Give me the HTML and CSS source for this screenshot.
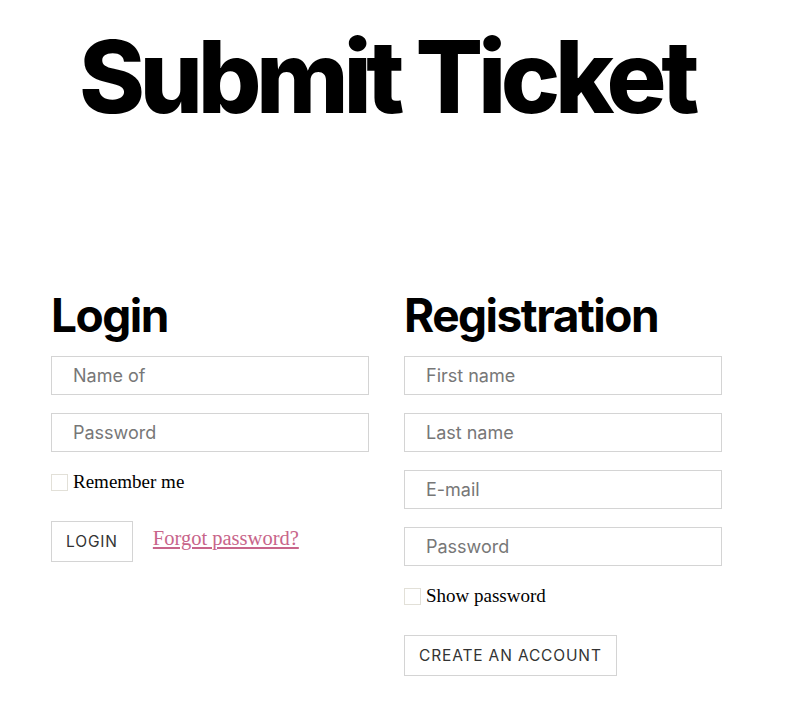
FILE: index.html
```html
<!DOCTYPE html>
<html>
<head>
<meta charset="utf-8">
<link rel="stylesheet" href="styles.css">
</head>
<body>
<h1 class="title">Submit Ticket</h1>
<div class="columns">
  <form class="col">
    <h2 class="heading">Login</h2>
    <input class="field" type="text" placeholder="Name of">
    <input class="field" type="password" placeholder="Password">
    <label class="check"><span class="box"></span>Remember me</label>
    <div class="actions">
      <button class="btn" type="button">LOGIN</button>
      <a class="link" href="#">Forgot password?</a>
    </div>
  </form>
  <form class="col">
    <h2 class="heading">Registration</h2>
    <input class="field" type="text" placeholder="First name">
    <input class="field" type="text" placeholder="Last name">
    <input class="field" type="text" placeholder="E-mail">
    <input class="field" type="password" placeholder="Password">
    <label class="check"><span class="box"></span>Show password</label>
    <div class="actions">
      <button class="btn" type="button">CREATE AN ACCOUNT</button>
    </div>
  </form>
</div>
</body>
</html>
```
FILE: styles.css
```css
* { box-sizing: border-box; }
body {
  margin: 0;
  background: #fff;
  font-family: Inter, "Noto Sans", sans-serif;
  color: #000;
}
.title {
  margin: 0;
  padding: 17px 0 0 79px;
  font-size: 100px;
  font-weight: 800;
  letter-spacing: -5.4px;
  line-height: 120px;
}
.columns {
  display: flex;
  gap: 35px;
  padding: 158px 0 0 51px;
}
.col {
  width: 318px;
  display: flex;
  flex-direction: column;
  margin: 0;
}
.heading {
  margin: 0 0 21px;
  font-size: 46px;
  font-weight: 700;
  letter-spacing: -1.5px;
  line-height: 40px;
}
.field {
  width: 318px;
  height: 39px;
  margin: 0 0 18px;
  border: 1px solid #d4d4d4;
  padding: 0 0 0 21px;
  font-family: Inter, sans-serif;
  font-size: 18px;
  color: #333;
  outline: none;
}
.field::placeholder { color: #777; }
.check {
  display: flex;
  align-items: center;
  gap: 5px;
  font-family: "Liberation Serif", serif;
  font-size: 19px;
  margin: 2px 0 29px;
  height: 20px;
}
.box {
  width: 17px;
  height: 17px;
  border: 1px solid #e2e0d8;
  display: inline-block;
}
.actions {
  display: flex;
  align-items: center;
  gap: 20px;
}
.btn {
  height: 41px;
  padding: 0 14px;
  background: #fff;
  border: 1px solid #d4d4d4;
  font-family: Inter, sans-serif;
  font-size: 15.5px;
  letter-spacing: 0.85px;
  color: #333;
}
.link {
  font-family: "Liberation Serif", serif;
  font-size: 20.5px;
  color: #c8658a;
  text-decoration: underline;
  margin-top: -6px;
}
```
